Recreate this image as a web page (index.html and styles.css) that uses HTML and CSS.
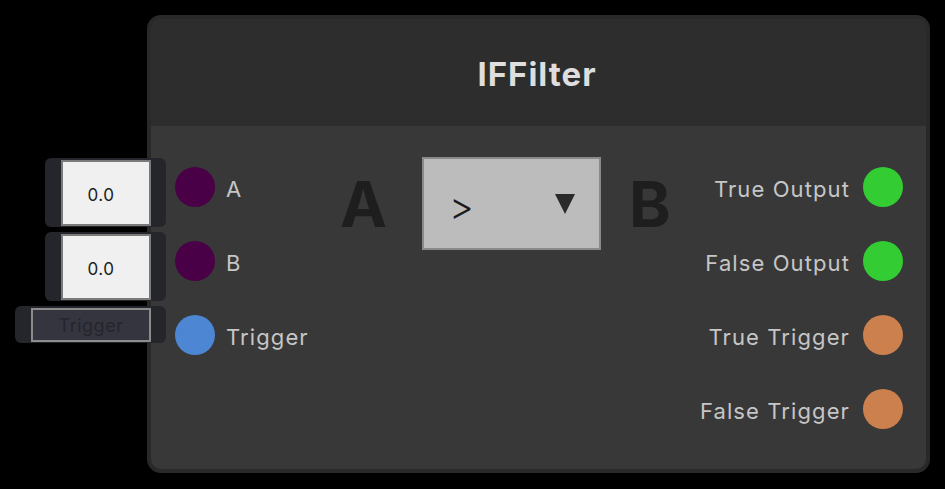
FILE: index.html
```html
<!DOCTYPE html>
<html>
<head>
<meta charset="utf-8">
<link rel="stylesheet" href="styles.css">
</head>
<body>
<div class="canvas">
  <div class="node">
    <div class="header">IFFilter</div>
    <div class="content">
      <div class="ports ports-in">
        <div class="port"><span class="dot dot-purple"></span><span class="label">A</span></div>
        <div class="port"><span class="dot dot-purple"></span><span class="label">B</span></div>
        <div class="port"><span class="dot dot-blue"></span><span class="label">Trigger</span></div>
      </div>
      <div class="center">
        <span class="big">A</span>
        <div class="dropdown">
          <span class="op">&gt;</span>
          <svg class="arrow" width="20" height="20" viewBox="0 0 20 20"><polygon points="0,0 20,0 10,20" fill="#2a2a2a"/></svg>
        </div>
        <span class="big big-b">B</span>
      </div>
      <div class="ports ports-out">
        <div class="port"><span class="label">True Output</span><span class="dot dot-green"></span></div>
        <div class="port"><span class="label">False Output</span><span class="dot dot-green"></span></div>
        <div class="port"><span class="label">True Trigger</span><span class="dot dot-orange"></span></div>
        <div class="port"><span class="label">False Trigger</span><span class="dot dot-orange"></span></div>
      </div>
    </div>
  </div>
  <div class="inputs">
    <div class="field-box"><div class="field field-num">0.0</div></div>
    <div class="field-box"><div class="field field-num">0.0</div></div>
    <div class="field-box field-box-wide"><div class="field field-trigger">Trigger</div></div>
  </div>
</div>
</body>
</html>
```
FILE: styles.css
```css
html, body {
  margin: 0;
  padding: 0;
  background: #000;
  font-family: Inter, "Noto Sans", sans-serif;
}
.canvas {
  position: relative;
  width: 945px;
  height: 489px;
  overflow: hidden;
}
.node {
  position: absolute;
  left: 147px;
  top: 15px;
  width: 783px;
  height: 458px;
  box-sizing: border-box;
  border: 4px solid #292929;
  border-radius: 14px;
  background: #383838;
  overflow: hidden;
  display: flex;
  flex-direction: column;
}
.header {
  height: 107px;
  background: #2d2d2d;
  color: #dedede;
  font-weight: 700;
  font-size: 33px;
  letter-spacing: 1px;
  display: flex;
  align-items: center;
  justify-content: center;
  padding-right: 3px;
  padding-top: 2px;
  box-sizing: border-box;
}
.content {
  flex: 1;
  display: flex;
  padding: 24px 23px 0 24px;
  align-items: flex-start;
}
.ports {
  display: flex;
  flex-direction: column;
}
.ports-in {
  width: 165px;
}
.ports-out {
  margin-left: auto;
  align-items: flex-end;
}
.port {
  height: 74px;
  display: flex;
  align-items: center;
  gap: 11px;
}
.ports-out .port {
  gap: 13px;
}
.dot {
  width: 40px;
  height: 40px;
  border-radius: 50%;
  flex: none;
}
.dot-purple { background: #4a0047; }
.dot-blue { background: #4d86d3; }
.dot-green { background: #33cc33; }
.dot-orange { background: #cc804d; }
.label {
  color: #c6c6c6;
  font-size: 22px;
  letter-spacing: 1.1px;
  margin-top: 4px;
}
.center {
  display: flex;
  align-items: center;
  margin-top: 7px;
}
.big {
  font-size: 63px;
  font-weight: 700;
  color: #1e1e1e;
  line-height: 1;
  margin-top: 2px;
}
.dropdown {
  width: 179px;
  height: 93px;
  box-sizing: border-box;
  border: 2px solid #8a8a8a;
  background: #bcbcbc;
  margin-left: 35px;
  margin-right: 28px;
  display: flex;
  align-items: center;
  padding-left: 25px;
  padding-right: 24px;
}
.op {
  font-size: 38px;
  font-weight: 300;
  color: #1a1a1a;
  margin-top: 4px;
}
.arrow {
  margin-left: auto;
}
.inputs {
  position: absolute;
  left: 15px;
  top: 158px;
  width: 151px;
  display: flex;
  flex-direction: column;
  align-items: flex-end;
  gap: 5px;
}
.field-box {
  width: 121px;
  height: 69px;
  box-sizing: border-box;
  background: #25252c;
  border-radius: 6px;
  padding: 2px 15px 1px 16px;
  display: flex;
}
.field-box-wide {
  width: 151px;
  height: 37px;
}
.field {
  flex: 1;
  box-sizing: border-box;
  border: 2px solid #7a7a7a;
  background: #f0f0f0;
  color: #202020;
  font-size: 17px;
  letter-spacing: 0.5px;
  display: flex;
  align-items: center;
  justify-content: center;
}
.field-num {
  padding-right: 10px;
  padding-top: 3px;
}
.field-trigger {
  background: #35353f;
  border-color: #8c8c8c;
  color: #25252c;
  font-size: 18px;
  padding-top: 1px;
}
```
